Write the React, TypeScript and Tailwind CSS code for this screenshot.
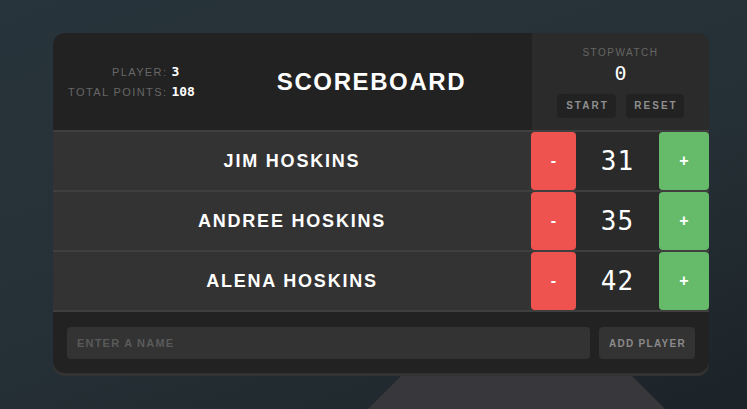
import { useState } from "react";

type Player = { id: number; name: string; score: number };

const initialPlayers: Player[] = [
  { id: 1, name: "Jim Hoskins", score: 31 },
  { id: 2, name: "Andree Hoskins", score: 35 },
  { id: 3, name: "Alena Hoskins", score: 42 },
];

const sans = "font-['Liberation_Sans',Arial,sans-serif]";
const mono = "font-['DejaVu_Sans_Mono',monospace]";

function Stats({ players }: { players: Player[] }) {
  const total = players.reduce((sum, p) => sum + p.score, 0);
  return (
    <div className="flex w-[157px] items-center justify-center">
      <div className="grid grid-cols-[auto_auto] items-baseline gap-x-[4px]">
        <span className={`${sans} text-right text-[11px] leading-[20px] tracking-[1.4px] text-[#676767]`}>PLAYER:</span>
        <span className={`${mono} text-[13px] font-bold leading-[20px] text-white`}>{players.length}</span>
        <span className={`${sans} text-right text-[11px] leading-[20px] tracking-[1.4px] text-[#676767]`}>TOTAL POINTS:</span>
        <span className={`${mono} text-[13px] font-bold leading-[20px] text-white`}>{total}</span>
      </div>
    </div>
  );
}

function Stopwatch() {
  const [elapsed, setElapsed] = useState(0);
  return (
    <div className="flex w-[177px] flex-col items-center justify-center bg-[#2b2b2b] pt-[1px]">
      <span className={`${sans} text-[10px] leading-[12px] tracking-[1.5px] text-[#666666]`}>STOPWATCH</span>
      <span className={`${mono} mt-[2px] text-[20px] leading-[24px] text-white`}>{elapsed}</span>
      <div className="mt-[9px] flex gap-[10px]">
        <button
          type="button"
          className={`${sans} h-[24px] w-[59px] rounded-[4px] bg-[#222222] pl-[2px] text-[10px] font-bold tracking-[2px] text-[#8f8f8f]`}
        >
          START
        </button>
        <button
          type="button"
          onClick={() => setElapsed(0)}
          className={`${sans} h-[24px] w-[58px] rounded-[4px] bg-[#222222] pl-[2px] text-[10px] font-bold tracking-[2px] text-[#8f8f8f]`}
        >
          RESET
        </button>
      </div>
    </div>
  );
}

export default function App() {
  const [players, setPlayers] = useState<Player[]>(initialPlayers);
  const [name, setName] = useState("");

  const change = (id: number, delta: number) =>
    setPlayers((prev) => prev.map((p) => (p.id === id ? { ...p, score: p.score + delta } : p)));

  const addPlayer = () => {
    const value = name.trim();
    if (!value) return;
    setPlayers((prev) => [...prev, { id: Date.now(), name: value, score: 0 }]);
    setName("");
  };

  return (
    <div className="h-[409px] w-full overflow-hidden bg-[linear-gradient(160deg,#28343b_0%,#253036_55%,#1c2328_100%)] pt-[33px]">
      <div className="relative z-10 ml-[53px] w-[656px] overflow-hidden rounded-[12px] bg-[#222222] shadow-[0_3px_0_#333333]">
        {/* header */}
        <div className="flex h-[97px]">
          <Stats players={players} />
          <div className="flex flex-1 items-center justify-center">
            <h1 className={`${sans} pl-[1px] text-[24px] font-bold tracking-[1.6px] text-white`}>SCOREBOARD</h1>
          </div>
          <Stopwatch />
        </div>

        {/* players */}
        <div className="border-t-2 border-[#3f3f3f]">
          {players.map((p) => (
            <div key={p.id} className="flex h-[60px] border-b-2 border-[#3f3f3f] bg-[#333333]">
              <div className={`${sans} flex flex-1 items-center justify-center text-[18px] font-bold uppercase tracking-[1.8px] text-white`}>
                {p.name}
              </div>
              <button
                type="button"
                onClick={() => change(p.id, -1)}
                className={`${sans} w-[45px] rounded-[4px] bg-[#ef5350] text-[16px] font-bold text-white`}
              >
                -
              </button>
              <div className={`${mono} flex w-[83px] items-center justify-center bg-[#2a2a2a] text-[26px] tracking-[1px] text-white`}>
                {p.score}
              </div>
              <button
                type="button"
                onClick={() => change(p.id, 1)}
                className={`${sans} w-[50px] rounded-[4px] bg-[#66bb6a] text-[16px] font-bold text-white`}
              >
                +
              </button>
            </div>
          ))}
        </div>

        {/* add player */}
        <div className="flex gap-[9px] px-[14px] pb-[14px] pt-[15px]">
          <input
            type="text"
            value={name}
            onChange={(e) => setName(e.target.value)}
            placeholder="ENTER A NAME"
            className={`${sans} h-[32px] flex-1 rounded-[4px] bg-[#333333] px-[10px] text-[11px] font-bold tracking-[1.2px] text-white outline-none placeholder:text-[#5a5a5a]`}
          />
          <button
            type="button"
            onClick={addPlayer}
            className={`${sans} h-[32px] w-[96px] rounded-[4px] bg-[#333333] pl-[1px] text-[10px] font-bold tracking-[1.3px] text-[#8a8a8a]`}
          >
            ADD PLAYER
          </button>
        </div>
      </div>

      {/* monitor stand */}
      <div className="ml-[364px] h-[40px] w-[305px] bg-[#38373b] [clip-path:polygon(40px_0,265px_0,305px_40px,0_40px)]" />
    </div>
  );
}
